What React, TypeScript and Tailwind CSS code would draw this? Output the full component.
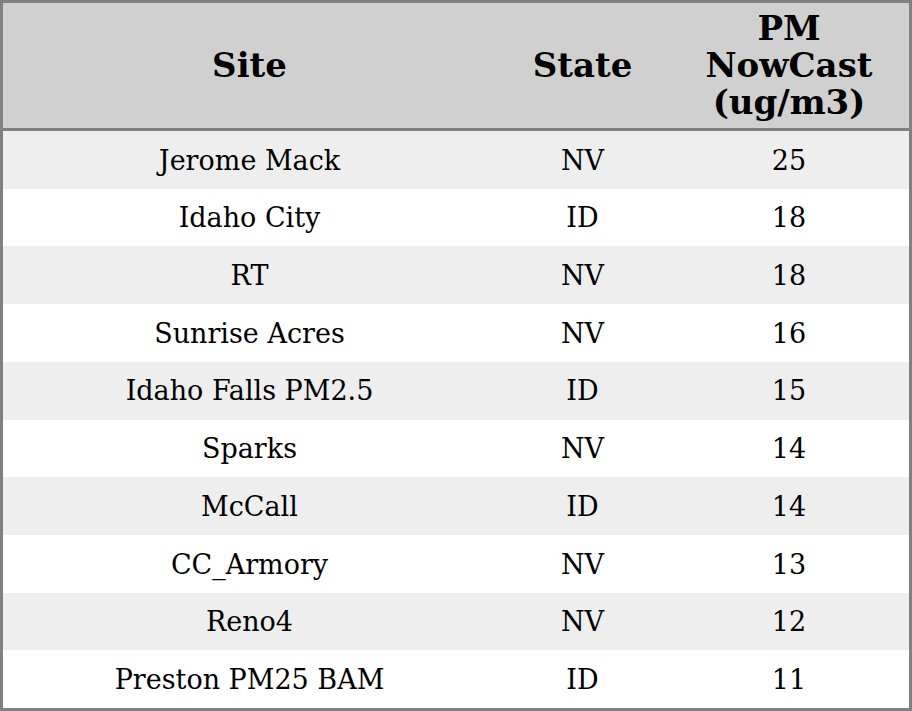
import React from "react";

const rows: [string, string, string][] = [
  ["Jerome Mack", "NV", "25"],
  ["Idaho City", "ID", "18"],
  ["RT", "NV", "18"],
  ["Sunrise Acres", "NV", "16"],
  ["Idaho Falls PM2.5", "ID", "15"],
  ["Sparks", "NV", "14"],
  ["McCall", "ID", "14"],
  ["CC_Armory", "NV", "13"],
  ["Reno4", "NV", "12"],
  ["Preston PM25 BAM", "ID", "11"],
];

export default function App() {
  return (
    <div
      className="w-[912px] h-[711px] border-[3px] border-[#808080] bg-white flex flex-col text-black"
      style={{ fontFamily: '"DejaVu Serif", serif' }}
    >
      <div className="h-[128px] shrink-0 bg-[#d0d0d0] border-b-[3px] border-[#808080] grid grid-cols-[493px_173px_240px] items-center text-center font-bold text-[34px] leading-[37px]">
        <div>Site</div>
        <div>State</div>
        <div>
          PM
          <br />
          NowCast
          <br />
          (ug/m3)
        </div>
      </div>
      <div className="flex-1 flex flex-col">
        {rows.map((r, i) => (
          <div
            key={i}
            className={`flex-1 grid grid-cols-[493px_173px_240px] items-center text-center text-[27px] pt-[2px] ${
              i % 2 === 0 ? "bg-[#eeeeee]" : "bg-white"
            }`}
          >
            <div>{r[0]}</div>
            <div>{r[1]}</div>
            <div>{r[2]}</div>
          </div>
        ))}
      </div>
    </div>
  );
}
